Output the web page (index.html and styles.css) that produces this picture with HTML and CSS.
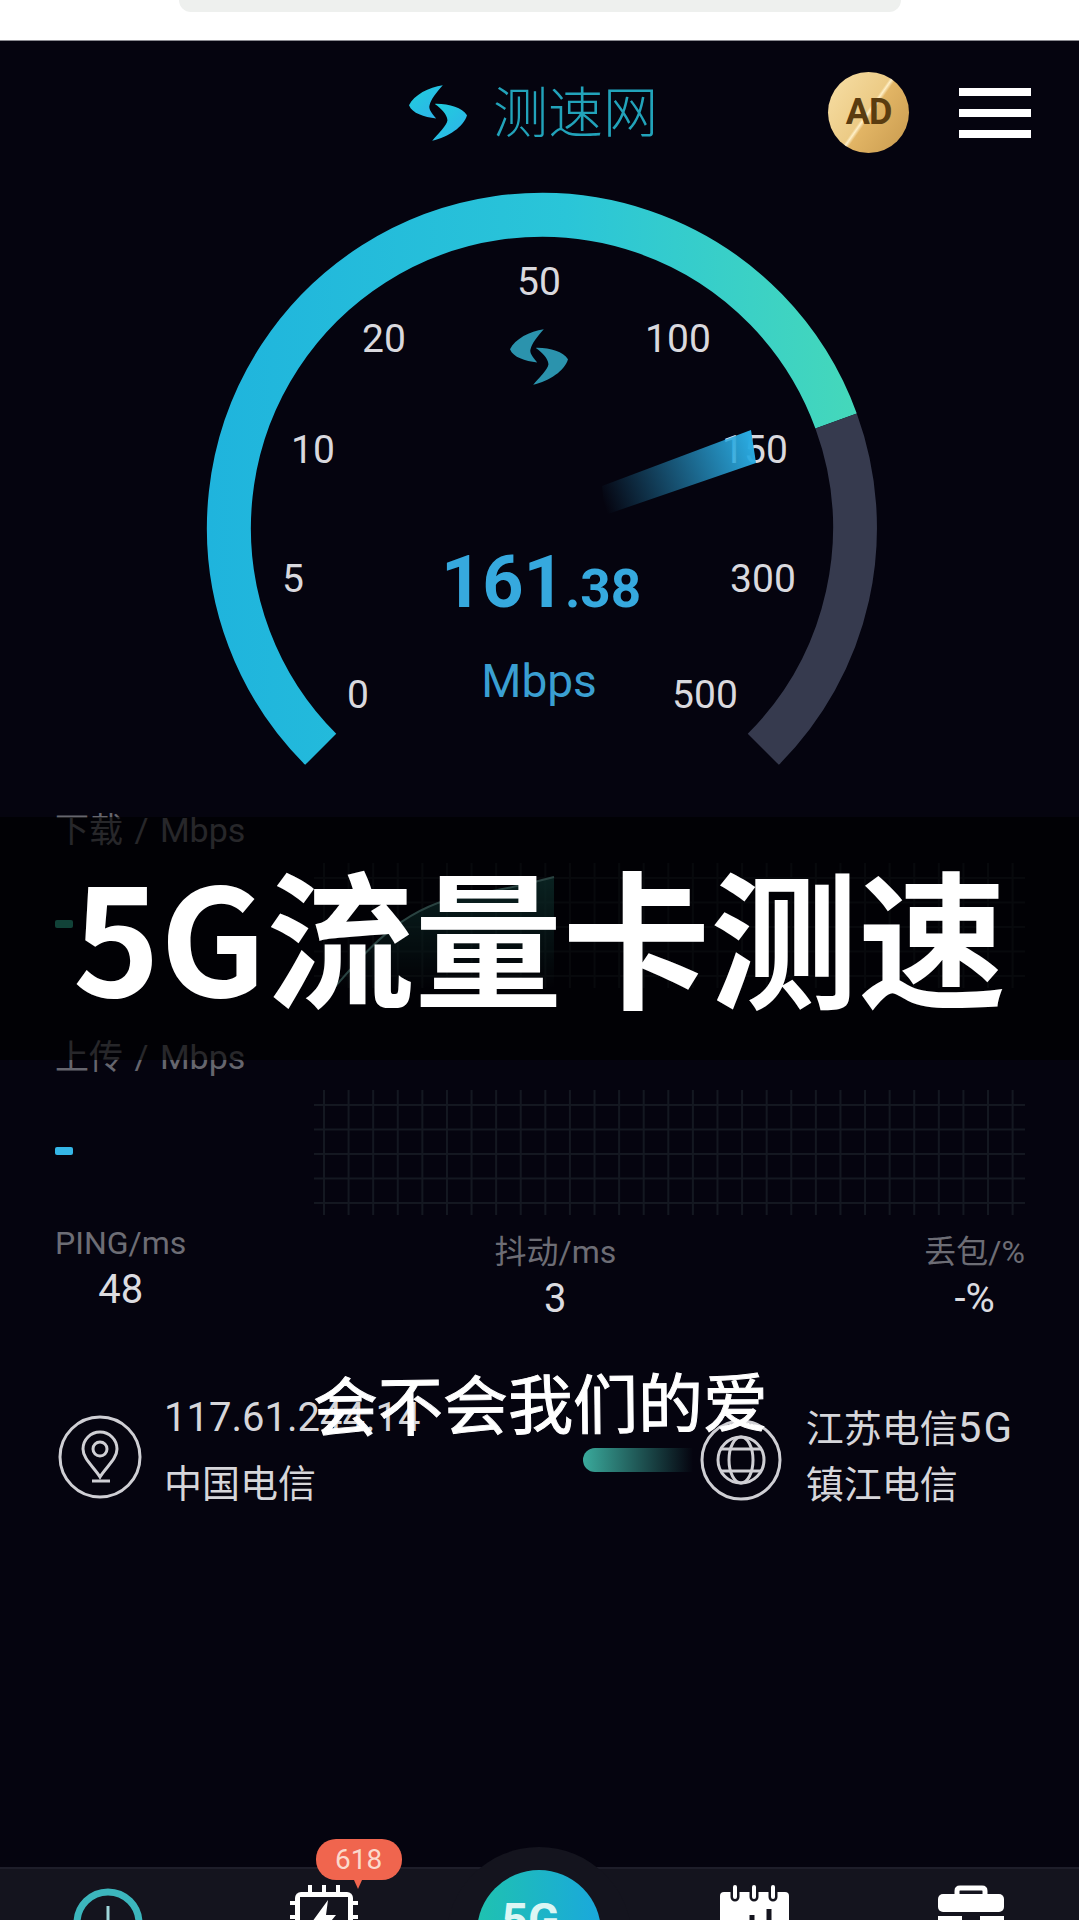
FILE: index.html
```html
<!DOCTYPE html>
<html lang="zh-CN">
<head>
  <meta charset="UTF-8" />
  <meta name="viewport" content="width=device-width, initial-scale=1.0" />
  <title>测速网</title>
  <link rel="stylesheet" href="styles.css">
</head>
<body>

  <div class="top-strip">
    <div class="search-pill"></div>
  </div>

  <div class="app">
    <svg width="0" height="0" class="defs">
      <defs>
        <symbol id="logo-mark" viewBox="30 40 175 167">
          <path d="M132 40C90 45 45 70 30 100C40 125 75 135 112 140C100 125 88 112 92 100C95 85 112 62 132 40Z" />
          <path d="M108 96C150 95 190 108 205 130C195 165 150 195 100 207C118 185 145 160 146 145C145 128 128 110 108 96Z" />
        </symbol>
        <linearGradient id="logo-fill" x1="0" y1="0" x2="1" y2="1">
          <stop offset="0" stop-color="#1fd0dc" />
          <stop offset="1" stop-color="#2fb0ea" />
        </linearGradient>
      </defs>
    </svg>

    <header class="header">
      <div class="brand">
        <svg class="brand-mark" width="58" height="56" fill="url(#logo-fill)"><use href="#logo-mark" /></svg>
        <span class="brand-name">测速网</span>
      </div>
      <div class="ad-badge">AD</div>
      <div class="menu"><span></span><span></span><span></span></div>
    </header>

    <!-- viewBox keeps the page coordinates of the dial -->
    <svg class="gauge" width="1079" height="630" viewBox="0 170 1079 630">
      <defs>
        <linearGradient id="arc-fill" gradientUnits="userSpaceOnUse" x1="208" y1="0" x2="860" y2="0">
          <stop offset="0" stop-color="#1fb4dd" />
          <stop offset="0.55" stop-color="#2ac5d8" />
          <stop offset="1" stop-color="#45d8ba" />
        </linearGradient>
        <linearGradient id="needle-fill" gradientUnits="userSpaceOnUse" x1="603" y1="502" x2="753" y2="445">
          <stop offset="0" stop-color="#2aa6e0" stop-opacity="0" />
          <stop offset="1" stop-color="#2aaae0" />
        </linearGradient>
      </defs>
      <path class="arc" stroke="url(#arc-fill)" d="M320.7 749.3A313 313 0 1 1 836.1 421" />
      <path class="arc" stroke="#363a4e" d="M836.1 421A313 313 0 0 1 763.3 749.3" />
      <use href="#logo-mark" x="510" y="329" width="58" height="56" fill="#2b93ad" />
      <g class="tick">
        <text x="539" y="295">50</text>
        <text x="384" y="352">20</text>
        <text x="678" y="352">100</text>
        <text x="313" y="463">10</text>
        <text x="755" y="463">150</text>
        <text x="293" y="592">5</text>
        <text x="763" y="592">300</text>
        <text x="358" y="708">0</text>
        <text x="705" y="708">500</text>
      </g>
      <polygon points="602,486 751,430 756,463 605,515" fill="url(#needle-fill)" />
      <text class="speed" x="541" y="607">161<tspan class="speed-dec">.38</tspan></text>
      <text class="unit" x="539" y="697">Mbps</text>
    </svg>

    <section class="speed-row speed-row-down">
      <div class="speed-info">
        <div class="speed-label">下载 / Mbps</div>
        <div class="dash dash-down"></div>
      </div>
      <div class="chart">
        <svg class="chart-curve" width="711" height="125" viewBox="0 0 711 125">
          <defs>
            <linearGradient id="curve-fill" x1="0" y1="0" x2="0" y2="1">
              <stop offset="0" stop-color="#1f6f68" stop-opacity="0.8" />
              <stop offset="1" stop-color="#1f6f68" stop-opacity="0" />
            </linearGradient>
          </defs>
          <path d="M20 125C55 85 90 42 155 32C195 26 225 18 240 14L240 125Z" fill="url(#curve-fill)" />
          <path d="M20 125C55 85 90 42 155 32C195 26 225 18 240 14" fill="none" stroke="#6fb0ac" stroke-width="2" />
        </svg>
      </div>
    </section>

    <section class="speed-row speed-row-up">
      <div class="speed-info">
        <div class="speed-label">上传 / Mbps</div>
        <div class="dash dash-up"></div>
      </div>
      <div class="chart"></div>
    </section>

    <section class="stats">
      <div class="stat">
        <div class="stat-label">PING/ms</div>
        <div class="stat-value">48</div>
      </div>
      <div class="stat stat-low">
        <div class="stat-label">抖动/ms</div>
        <div class="stat-value">3</div>
      </div>
      <div class="stat stat-low">
        <div class="stat-label">丢包/%</div>
        <div class="stat-value">-%</div>
      </div>
    </section>

    <section class="isp">
      <div class="isp-side">
        <svg class="isp-icon isp-icon-left" width="84" height="84" viewBox="0 0 84 84">
          <circle cx="42" cy="42" r="40" />
          <path d="M42 62C36 52 25 44 25 34A17 17 0 1 1 59 34C59 44 48 52 42 62Z" />
          <circle cx="42" cy="34" r="7" />
          <path d="M34 66H52" />
        </svg>
        <div class="isp-text isp-text-left">
          <div class="isp-ip">117.61.244.14</div>
          <div>中国电信</div>
        </div>
      </div>
      <div class="isp-side">
        <div class="go-pill"></div>
        <svg class="isp-icon isp-icon-right" width="82" height="82" viewBox="0 0 82 82">
          <circle cx="41" cy="41" r="39" />
          <circle cx="41" cy="41" r="23" />
          <ellipse cx="41" cy="41" rx="12" ry="23" />
          <path d="M21 30H61M21 52H61" />
        </svg>
        <div class="isp-text isp-text-right">
          <div>江苏电信<span class="isp-net">5G</span></div>
          <div>镇江电信</div>
        </div>
      </div>
    </section>

    <nav class="nav">
      <div class="nav-item">
        <svg width="80" height="60" viewBox="0 0 80 60">
          <circle cx="40" cy="38" r="31" fill="none" stroke="#3cb6bd" stroke-width="7" />
          <path d="M40 21V40" stroke="#9fd6da" stroke-width="3" />
        </svg>
      </div>
      <div class="nav-item">
        <svg width="80" height="60" viewBox="0 0 80 60">
          <path d="M26 0V8M40 0V8M54 0V8M6 18H14M66 18H74M6 32H14M66 32H74" stroke="#fff" stroke-width="4" />
          <rect x="11" y="7" width="58" height="53" rx="6" fill="#fff" />
          <rect x="16" y="12" width="48" height="48" fill="#14141e" />
          <path d="M44 15L28 37H38L34 52L52 30H42Z" fill="#fff" />
        </svg>
        <div class="nav-badge">618</div>
      </div>
      <div class="nav-item">
        <div class="go-halo">
          <div class="go-btn">5G</div>
        </div>
      </div>
      <div class="nav-item">
        <svg width="80" height="60" viewBox="0 0 80 60">
          <rect x="5" y="7" width="69" height="53" rx="4" fill="#fff" />
          <path d="M20 2V12M39 2V12M58 2V12" stroke="#14141e" stroke-width="9" stroke-linecap="round" />
          <path d="M20 2V12M39 2V12M58 2V12" stroke="#fff" stroke-width="4" stroke-linecap="round" />
          <path d="M37 30V60M54 24V60" stroke="#14141e" stroke-width="5" />
        </svg>
      </div>
      <div class="nav-item">
        <svg width="80" height="60" viewBox="0 0 80 60">
          <path d="M26 10V6Q26 3 29 3H51Q54 3 54 6V10" fill="none" stroke="#fff" stroke-width="5" />
          <rect x="7" y="9" width="66" height="18" rx="5" fill="#fff" />
          <path d="M7 31H31V37H49V31H73V60H7Z" fill="#fff" />
        </svg>
      </div>
    </nav>

    <div class="band">
      <div class="headline">5G流量卡测速</div>
    </div>
    <div class="lyric">会不会我们的爱</div>
  </div>

</body>
</html>
```

FILE: styles.css
```css
* {
  box-sizing: border-box;
}

html,
body {
  margin: 0;
  height: 1920px;
  overflow: hidden;
  background: #fff;
  font-family: Roboto, "Noto Sans CJK SC", sans-serif;
}

.top-strip {
  height: 40px;
  background: #fff;
}

.search-pill {
  width: 722px;
  height: 12px;
  margin: 0 auto;
  background: #eef0ee;
  border-radius: 0 0 26px 26px;
}

.app {
  position: relative;
  height: 1880px;
  background: #05040f;
  border-top: 1px solid #8a8a90;
  overflow: hidden;
}

.defs {
  position: absolute;
}

/* header */
.header {
  display: flex;
  align-items: center;
  height: 129px;
  padding: 14px 48px 0 409px;
}

.brand {
  display: flex;
  align-items: center;
  gap: 26px;
}

.brand-name {
  font-size: 55px;
  line-height: 56px;
  font-weight: 300;
  color: #22a3ba;
}

.ad-badge {
  width: 81px;
  height: 81px;
  margin-left: auto;
  border-radius: 50%;
  background: linear-gradient(125deg, #f7dfa6 0%, #eccb86 48%, #fff0c8 50%, #e2b565 53%, #c89a4e 100%);
  color: #5a3c10;
  font-size: 36px;
  font-weight: 700;
  line-height: 81px;
  text-align: center;
  letter-spacing: -1px;
}

.menu {
  display: flex;
  flex-direction: column;
  gap: 13px;
  margin-left: 50px;
}

.menu span {
  display: block;
  width: 72px;
  height: 8px;
  background: #fff;
}

/* dial */
.gauge {
  display: block;
}

.arc {
  fill: none;
  stroke-width: 44;
}

.tick text {
  fill: #d9d9de;
  font-size: 39px;
  text-anchor: middle;
}

.speed {
  fill: #36a9de;
  font-size: 72px;
  font-weight: 700;
  text-anchor: middle;
}

.speed-dec {
  font-size: 53px;
}

.unit {
  fill: #3a9fd2;
  font-size: 46px;
  text-anchor: middle;
}

/* download / upload rows */
.speed-row {
  display: flex;
  padding: 0 54px 0 55px;
}

.speed-row-down {
  height: 227px;
  margin-top: 8px;
}

.speed-row-up {
  height: 190px;
}

.speed-info {
  width: 259px;
}

.speed-label {
  font-size: 34px;
  line-height: 44px;
  word-spacing: 3px;
  color: #66666e;
}

.dash {
  width: 18px;
  height: 8px;
  margin-top: 68px;
  border-radius: 2px;
}

.dash-down {
  background: #2fae94;
}

.dash-up {
  background: #35b6e6;
}

.chart {
  position: relative;
  width: 711px;
  height: 125px;
  margin-top: 55px;
  background-image:
    linear-gradient(#141821 2px, transparent 2px),
    linear-gradient(90deg, #141821 2px, transparent 2px);
  background-size: 24.6px 24.5px;
  background-position: 0 14px, 9px 0;
}

.chart-curve {
  display: block;
}

/* ping row */
.stats {
  display: flex;
  justify-content: space-between;
  height: 160px;
  padding: 0 54px 0 55px;
}

.stat {
  text-align: center;
}

.stat-low {
  padding-top: 9px;
}

.stat-label {
  font-size: 32px;
  line-height: 36px;
  color: #6d6d75;
}

.stat-value {
  margin-top: 9px;
  font-size: 40px;
  line-height: 40px;
  color: #dcdce0;
}

/* operator row */
.isp {
  display: flex;
  justify-content: space-between;
  padding: 0 65px 0 58px;
  color: #d6d6da;
  font-size: 38px;
}

.isp-side {
  display: flex;
  align-items: flex-start;
}

.isp-icon {
  fill: none;
  stroke: #cfcfd4;
  stroke-width: 3;
}

.isp-icon-left {
  margin-top: 30px;
}

.isp-icon-right {
  margin-top: 34px;
}

.isp-text-left {
  margin-left: 22px;
  line-height: 66px;
}

.isp-ip {
  font-size: 40px;
}

.isp-text-right {
  margin-top: 15px;
  margin-left: 24px;
  line-height: 56px;
}

.isp-net {
  font-size: 42px;
  letter-spacing: 2px;
}

.go-pill {
  width: 110px;
  height: 24px;
  margin-top: 63px;
  margin-right: 7px;
  border-radius: 12px 0 0 12px;
  background: linear-gradient(90deg, #3aaa9c, rgba(58, 170, 156, 0));
}

/* bottom bar */
.nav {
  position: absolute;
  left: 0;
  right: 0;
  top: 1826px;
  height: 60px;
  display: grid;
  grid-template-columns: repeat(5, 1fr);
  justify-items: center;
  background: #14141e;
  border-top: 2px solid #1e1e2a;
}

.nav-item {
  position: relative;
  display: flex;
  justify-content: center;
  height: 60px;
  padding-top: 16px;
}

.nav-badge {
  position: absolute;
  top: -30px;
  left: 32px;
  width: 86px;
  height: 41px;
  border-radius: 20px;
  background: #f0654e;
  color: #fbd9cc;
  font-size: 28px;
  line-height: 41px;
  text-align: center;
}

.nav-badge::after {
  content: "";
  position: absolute;
  top: 100%;
  left: 38px;
  border-style: solid;
  border-width: 9px 4px 0 4px;
  border-color: #f0654e transparent transparent transparent;
}

.go-halo {
  width: 186px;
  height: 186px;
  margin-top: -38px;
  padding-top: 23px;
  border-radius: 50%;
  background: #14141e;
}

.go-btn {
  width: 124px;
  height: 124px;
  margin: 0 auto;
  padding-right: 18px;
  border-radius: 50%;
  background: linear-gradient(90deg, #1fc2b0, #1aa8dc);
  color: #dcf6f4;
  font-size: 46px;
  font-weight: 700;
  line-height: 100px;
  text-align: center;
}

/* video caption overlays */
.band {
  position: absolute;
  left: 0;
  right: 0;
  top: 776px;
  height: 243px;
  padding-bottom: 12px;
  display: flex;
  align-items: center;
  justify-content: center;
  background: rgba(0, 0, 0, 0.62);
}

.headline {
  font-family: "Noto Sans CJK SC", sans-serif;
  font-size: 148px;
  font-weight: 700;
  line-height: 1;
  color: #fff;
  white-space: nowrap;
}

.lyric {
  position: absolute;
  left: 313px;
  top: 1322px;
  font-family: "Noto Sans CJK SC", sans-serif;
  font-size: 65px;
  line-height: 76px;
  color: #fff;
  white-space: nowrap;
  -webkit-text-stroke: 1px #fff;
  transform: rotate(-0.6deg);
}
```
